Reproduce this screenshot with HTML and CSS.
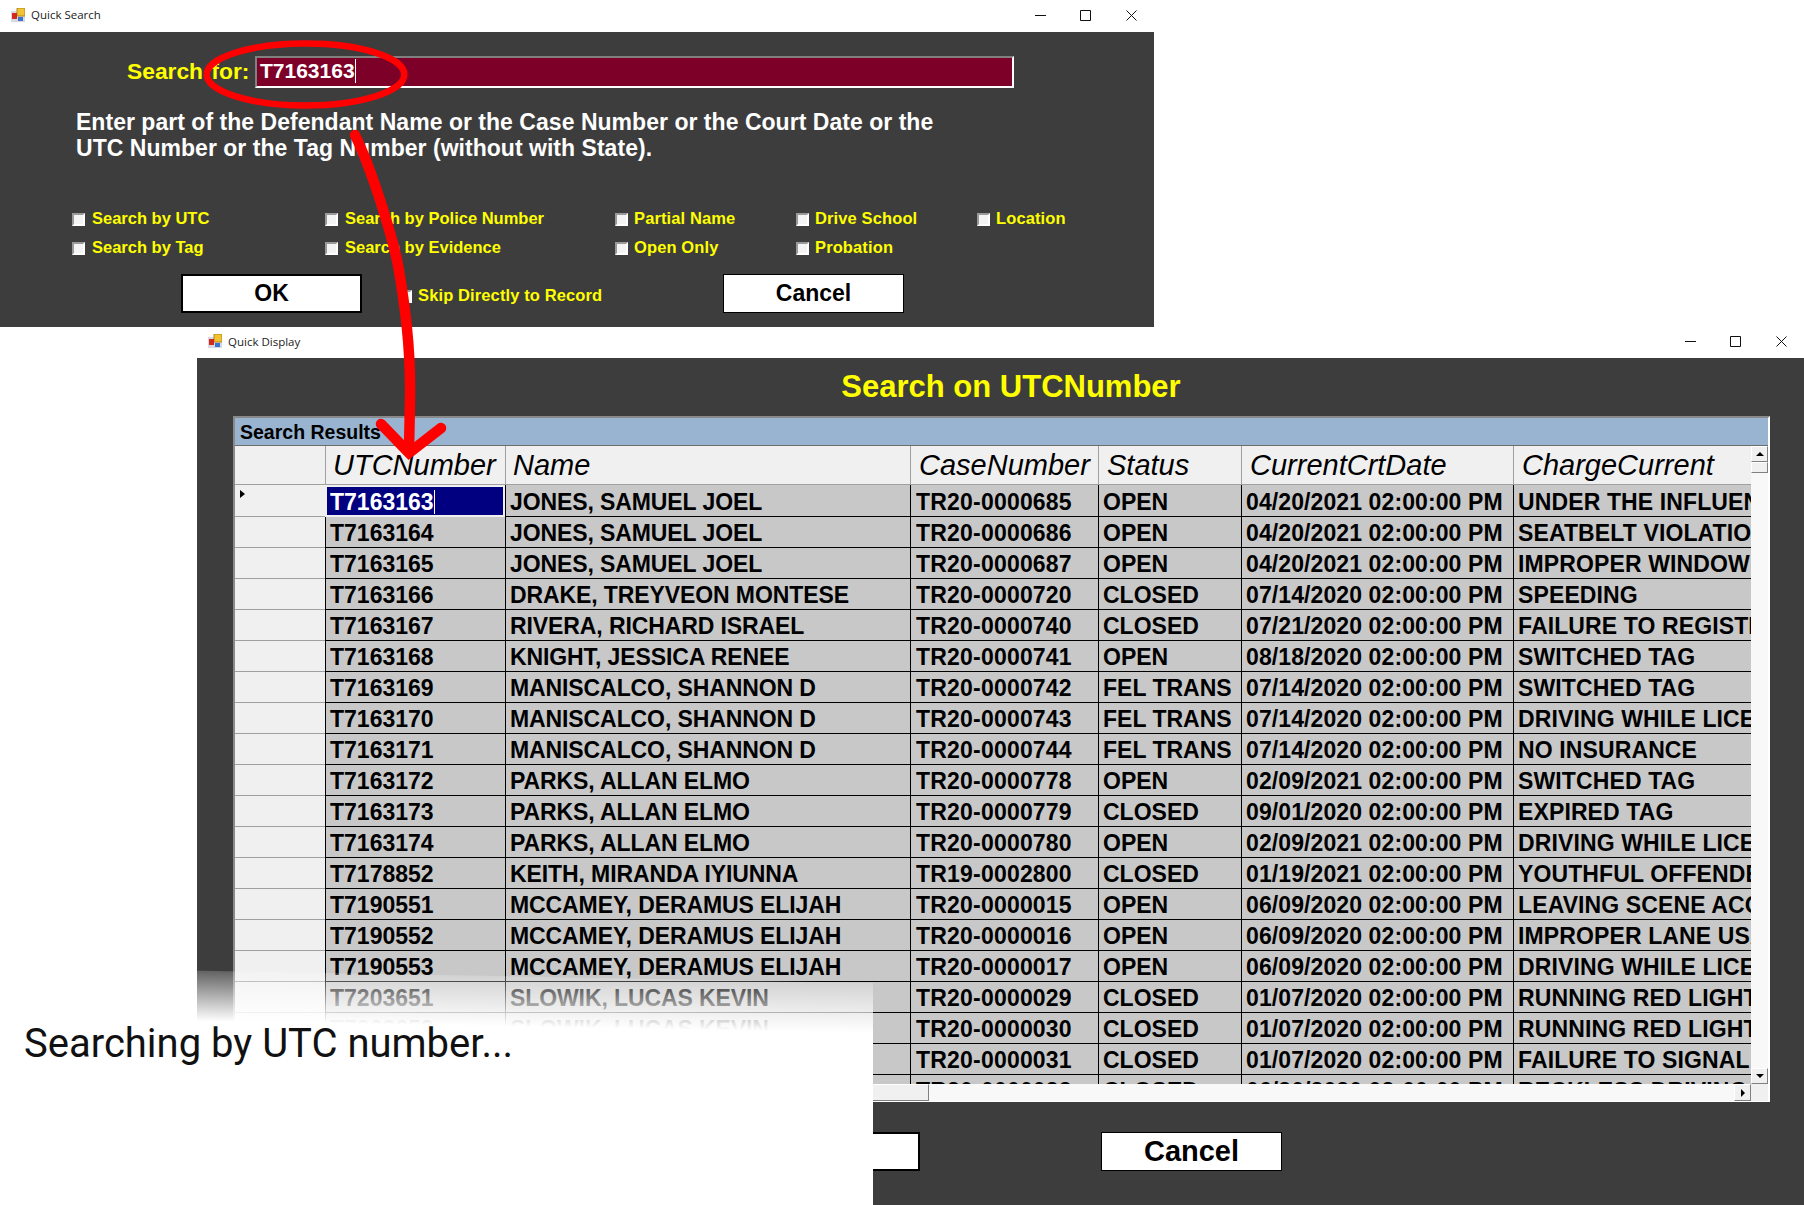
FILE: index.html
```html
<!DOCTYPE html>
<html lang="en">
<head>
    <meta charset="UTF-8">
    <meta name="viewport" content="width=device-width, initial-scale=1.0">
    <title>Searching by UTC number</title>
    <link rel="stylesheet" href="styles.css">
</head>
<body>

    <!-- Quick Search window -->
    <div class="window search-window">
        <div class="titlebar">
            <svg class="app-icon" viewBox="0 0 14 14"><rect x="0" y="3" width="14" height="11" fill="#d8d8e0"/><rect x="6" y="0" width="8" height="8" fill="#f2c230" stroke="#b08a20"/><rect x="1" y="5" width="5" height="6" fill="#d22a1e"/><rect x="7" y="9" width="5" height="4" fill="#3a72d0"/></svg>
            <span class="title-text">Quick Search</span>
            <div class="controls">
                <span class="control"><svg viewBox="0 0 11 11"><path d="M0 5.5H11" /></svg></span>
                <span class="control"><svg viewBox="0 0 11 11"><path d="M.5 .5H10.5V10.5H.5Z" /></svg></span>
                <span class="control"><svg viewBox="0 0 11 11"><path d="M.5 .5L10.5 10.5M10.5 .5L.5 10.5" /></svg></span>
            </div>
        </div>
        <div class="search-body">
            <div class="search-row">
                <span class="search-label">Search for:</span>
                <div class="search-input"><span class="caret">T7163163</span></div>
            </div>
            <p class="help">Enter part of the Defendant Name or the Case Number or the Court Date or the<br>UTC Number or the Tag Number (without with State).</p>
            <div class="options">
                <label class="option"><span class="check"></span>Search by UTC</label>
                <label class="option"><span class="check"></span>Search by Police Number</label>
                <label class="option tight"><span class="check"></span>Partial Name</label>
                <label class="option tight"><span class="check"></span>Drive School</label>
                <label class="option tight"><span class="check"></span>Location</label>
                <label class="option"><span class="check"></span>Search by Tag</label>
                <label class="option"><span class="check"></span>Search by Evidence</label>
                <label class="option tight"><span class="check"></span>Open Only</label>
                <label class="option tight"><span class="check"></span>Probation</label>
            </div>
            <div class="button-row">
                <button class="btn btn-default">OK</button>
                <label class="option tight skip"><span class="check"></span>Skip Directly to Record</label>
                <button class="btn">Cancel</button>
            </div>
        </div>
    </div>

    <!-- Quick Display window -->
    <div class="window display-window">
        <div class="titlebar">
            <svg class="app-icon" viewBox="0 0 14 14"><rect x="0" y="3" width="14" height="11" fill="#d8d8e0"/><rect x="6" y="0" width="8" height="8" fill="#f2c230" stroke="#b08a20"/><rect x="1" y="5" width="5" height="6" fill="#d22a1e"/><rect x="7" y="9" width="5" height="4" fill="#3a72d0"/></svg>
            <span class="title-text">Quick Display</span>
            <div class="controls">
                <span class="control"><svg viewBox="0 0 11 11"><path d="M0 5.5H11" /></svg></span>
                <span class="control"><svg viewBox="0 0 11 11"><path d="M.5 .5H10.5V10.5H.5Z" /></svg></span>
                <span class="control"><svg viewBox="0 0 11 11"><path d="M.5 .5L10.5 10.5M10.5 .5L.5 10.5" /></svg></span>
            </div>
        </div>
        <div class="display-body">
            <h1 class="display-title">Search on UTCNumber</h1>
            <div class="results">
                <div class="results-caption">Search Results</div>
                <div class="results-grid">
                    <div class="table-wrap">
                        <table>
                            <colgroup>
                                <col class="c-head"><col class="c-utc"><col class="c-name"><col class="c-case"><col class="c-status"><col class="c-date"><col class="c-charge">
                            </colgroup>
                            <thead>
                                <tr><th></th><th>UTCNumber</th><th>Name</th><th>CaseNumber</th><th>Status</th><th>CurrentCrtDate</th><th>ChargeCurrent</th></tr>
                            </thead>
                            <tbody>
                                <tr><th class="row-head current"></th><td class="selected"><span class="caret">T7163163</span></td><td>JONES, SAMUEL JOEL</td><td>TR20-0000685</td><td>OPEN</td><td>04/20/2021 02:00:00 PM</td><td>UNDER THE INFLUENCE</td></tr>
                                <tr><th class="row-head"></th><td>T7163164</td><td>JONES, SAMUEL JOEL</td><td>TR20-0000686</td><td>OPEN</td><td>04/20/2021 02:00:00 PM</td><td>SEATBELT VIOLATION</td></tr>
                                <tr><th class="row-head"></th><td>T7163165</td><td>JONES, SAMUEL JOEL</td><td>TR20-0000687</td><td>OPEN</td><td>04/20/2021 02:00:00 PM</td><td>IMPROPER WINDOW</td></tr>
                                <tr><th class="row-head"></th><td>T7163166</td><td>DRAKE, TREYVEON MONTESE</td><td>TR20-0000720</td><td>CLOSED</td><td>07/14/2020 02:00:00 PM</td><td>SPEEDING</td></tr>
                                <tr><th class="row-head"></th><td>T7163167</td><td>RIVERA, RICHARD ISRAEL</td><td>TR20-0000740</td><td>CLOSED</td><td>07/21/2020 02:00:00 PM</td><td>FAILURE TO REGISTER</td></tr>
                                <tr><th class="row-head"></th><td>T7163168</td><td>KNIGHT, JESSICA RENEE</td><td>TR20-0000741</td><td>OPEN</td><td>08/18/2020 02:00:00 PM</td><td>SWITCHED TAG</td></tr>
                                <tr><th class="row-head"></th><td>T7163169</td><td>MANISCALCO, SHANNON D</td><td>TR20-0000742</td><td>FEL TRANS</td><td>07/14/2020 02:00:00 PM</td><td>SWITCHED TAG</td></tr>
                                <tr><th class="row-head"></th><td>T7163170</td><td>MANISCALCO, SHANNON D</td><td>TR20-0000743</td><td>FEL TRANS</td><td>07/14/2020 02:00:00 PM</td><td>DRIVING WHILE LICENSE</td></tr>
                                <tr><th class="row-head"></th><td>T7163171</td><td>MANISCALCO, SHANNON D</td><td>TR20-0000744</td><td>FEL TRANS</td><td>07/14/2020 02:00:00 PM</td><td>NO INSURANCE</td></tr>
                                <tr><th class="row-head"></th><td>T7163172</td><td>PARKS, ALLAN ELMO</td><td>TR20-0000778</td><td>OPEN</td><td>02/09/2021 02:00:00 PM</td><td>SWITCHED TAG</td></tr>
                                <tr><th class="row-head"></th><td>T7163173</td><td>PARKS, ALLAN ELMO</td><td>TR20-0000779</td><td>CLOSED</td><td>09/01/2020 02:00:00 PM</td><td>EXPIRED TAG</td></tr>
                                <tr><th class="row-head"></th><td>T7163174</td><td>PARKS, ALLAN ELMO</td><td>TR20-0000780</td><td>OPEN</td><td>02/09/2021 02:00:00 PM</td><td>DRIVING WHILE LICENSE</td></tr>
                                <tr><th class="row-head"></th><td>T7178852</td><td>KEITH, MIRANDA IYIUNNA</td><td>TR19-0002800</td><td>CLOSED</td><td>01/19/2021 02:00:00 PM</td><td>YOUTHFUL OFFENDER</td></tr>
                                <tr><th class="row-head"></th><td>T7190551</td><td>MCCAMEY, DERAMUS ELIJAH</td><td>TR20-0000015</td><td>OPEN</td><td>06/09/2020 02:00:00 PM</td><td>LEAVING SCENE ACCIDENT</td></tr>
                                <tr><th class="row-head"></th><td>T7190552</td><td>MCCAMEY, DERAMUS ELIJAH</td><td>TR20-0000016</td><td>OPEN</td><td>06/09/2020 02:00:00 PM</td><td>IMPROPER LANE USAGE</td></tr>
                                <tr><th class="row-head"></th><td>T7190553</td><td>MCCAMEY, DERAMUS ELIJAH</td><td>TR20-0000017</td><td>OPEN</td><td>06/09/2020 02:00:00 PM</td><td>DRIVING WHILE LICENSE</td></tr>
                                <tr><th class="row-head"></th><td>T7203651</td><td>SLOWIK, LUCAS KEVIN</td><td>TR20-0000029</td><td>CLOSED</td><td>01/07/2020 02:00:00 PM</td><td>RUNNING RED LIGHT</td></tr>
                                <tr><th class="row-head"></th><td>T7203652</td><td>SLOWIK, LUCAS KEVIN</td><td>TR20-0000030</td><td>CLOSED</td><td>01/07/2020 02:00:00 PM</td><td>RUNNING RED LIGHT</td></tr>
                                <tr><th class="row-head"></th><td>T7203653</td><td>SLOWIK, LUCAS KEVIN</td><td>TR20-0000031</td><td>CLOSED</td><td>01/07/2020 02:00:00 PM</td><td>FAILURE TO SIGNAL</td></tr>
                                <tr><th class="row-head"></th><td>T7203654</td><td>SLOWIK, LUCAS KEVIN</td><td>TR20-0000032</td><td>CLOSED</td><td>06/30/2020 02:00:00 PM</td><td>RECKLESS DRIVING</td></tr>
                            </tbody>
                        </table>
                    </div>
                    <div class="vscroll">
                        <span class="scroll-btn"><i class="arrow-up"></i></span>
                        <span class="vthumb"></span>
                        <span class="scroll-track"></span>
                        <span class="scroll-btn"><i class="arrow-down"></i></span>
                    </div>
                    <div class="hscroll">
                        <span class="hthumb"></span>
                        <span class="scroll-track"></span>
                        <span class="scroll-btn"><i class="arrow-right"></i></span>
                    </div>
                    <div class="corner"></div>
                </div>
            </div>
            <div class="display-buttons">
                <button class="btn btn-default">OK</button>
                <button class="btn">Cancel</button>
            </div>
        </div>
    </div>

    <!-- White caption panel that fades over the lower left of the display window -->
    <div class="caption-panel">
        <p class="caption-text">Searching by UTC number...</p>
    </div>

    <!-- Red annotation drawn over both windows -->
    <svg class="annotation" viewBox="0 0 1804 1205">
        <ellipse cx="305.5" cy="74.5" rx="98.8" ry="31" />
        <path class="stem" d="M355 135C372 170 392 235 398 265C404 300 411 345 410 400L409 450" />
        <path class="stem" d="M381 424L409 453L441 428" />
    </svg>

</body>
</html>
```

FILE: styles.css
```css
* {
    box-sizing: border-box;
}

html {
    overflow: hidden;
}

body {
    margin: 0;
    width: 1804px;
    height: 1205px;
    position: relative;
    overflow: hidden;
    background-color: white;
    font-family: "Liberation Sans", Arial, sans-serif;
}

.window {
    position: absolute;
    background-color: white;
}

.search-window {
    left: 0;
    top: 0;
    width: 1154px;
}

.display-window {
    left: 197px;
    top: 327px;
    width: 1607px;
    height: 878px;
}

/* Title bar */
.titlebar {
    display: flex;
    align-items: flex-start;
    height: 32px;
    padding-left: 11px;
    background-color: white;
}

.display-window .titlebar {
    height: 31px;
}

.app-icon {
    width: 14px;
    height: 14px;
    margin-top: 8px;
    margin-right: 6px;
}

.display-window .app-icon {
    margin-top: 7px;
}

.title-text {
    font-family: "Open Sans", sans-serif;
    font-size: 11.5px;
    line-height: 30px;
    color: #222;
}

.display-window .title-text {
    line-height: 29px;
}

.controls {
    display: flex;
    margin-left: auto;
}

.control {
    display: flex;
    align-items: center;
    justify-content: center;
    width: 45px;
    height: 30px;
}

.control:last-child {
    margin-left: 1px;
}

.display-window .control {
    height: 29px;
}

.control svg {
    width: 11px;
    height: 11px;
    fill: none;
    stroke: #111;
    stroke-width: 1;
}

/* Search form */
.search-body {
    height: 295px;
    background-color: #3d3d3d;
    overflow: hidden;
}

.search-row {
    display: flex;
    align-items: center;
    margin-top: 24px;
    padding-left: 127px;
}

.search-label {
    width: 128px;
    padding-bottom: 2px;
    font-size: 22.8px;
    word-spacing: 2px;
    font-weight: bold;
    color: #ffff00;
}

.search-input {
    width: 759px;
    height: 32px;
    padding-left: 3px;
    line-height: 25px;
    font-size: 21px;
    font-weight: bold;
    color: white;
    background-color: #7d0029;
    border: 2px solid white;
    border-top-color: #808080;
    border-left-color: #808080;
}

.caret {
    display: inline-block;
    line-height: 24px;
    border-right: 1px solid white;
}

.help {
    margin: 21px 0 0;
    padding-left: 76px;
    font-size: 23px;
    line-height: 26px;
    letter-spacing: 0.03px;
    font-weight: bold;
    color: white;
}

.options {
    display: grid;
    grid-template-columns: 253px 290px 181px 181px auto;
    grid-auto-rows: 29px;
    margin-top: 43px;
    padding-left: 72px;
}

.option {
    display: flex;
    align-items: center;
    font-size: 16.5px;
    font-weight: bold;
    color: #ffff00;
}

.check {
    width: 13px;
    height: 13px;
    margin-right: 7px;
    margin-top: 2px;
    background-color: #f4f4f4;
    border: 2px solid white;
    border-top-color: #9a9a9a;
    border-left-color: #9a9a9a;
}

.tight {
    letter-spacing: 0.12px;
}

.tight .check {
    margin-right: 6px;
}

.button-row {
    display: flex;
    align-items: center;
    margin-top: 12px;
    padding-left: 181px;
}

.skip {
    width: 324px;
    margin-left: 37px;
    padding-top: 3px;
}

.btn {
    width: 181px;
    height: 39px;
    padding: 0;
    font-family: "Liberation Sans", Arial, sans-serif;
    font-size: 23px;
    font-weight: bold;
    color: black;
    background-color: white;
    border: 1px solid black;
}

.btn-default {
    border-width: 2px;
}

/* Results window */
.display-body {
    height: 847px;
    padding-left: 36px;
    background-color: #3d3d3d;
}

.display-title {
    margin: 0;
    padding-right: 15px;
    height: 58px;
    line-height: 57px;
    text-align: center;
    font-size: 31px;
    font-weight: bold;
    color: #ffff00;
}

.results {
    display: flex;
    flex-direction: column;
    width: 1537px;
    height: 686px;
    background-color: #f0f0f0;
    border: 2px solid white;
    border-top-color: #8a8a8a;
    border-left-color: #8a8a8a;
}

.results-caption {
    flex: none;
    height: 28px;
    padding-left: 5px;
    line-height: 28px;
    font-size: 19.5px;
    font-weight: bold;
    color: black;
    background-color: #99b4d1;
    border-bottom: 1px solid #6d6d6d;
}

.results-grid {
    flex: 1;
    display: grid;
    grid-template-columns: 1516px 17px;
    grid-template-rows: 638px 17px;
    min-height: 0;
}

.table-wrap {
    overflow: hidden;
    background-color: #f8f8f8;
}

table {
    width: 1516px;
    table-layout: fixed;
    border-collapse: separate;
    border-spacing: 0;
}

.c-head { width: 90px; }
.c-utc { width: 180px; }
.c-name { width: 405px; }
.c-case { width: 188px; }
.c-status { width: 143px; }
.c-date { width: 272px; }
.c-charge { width: 238px; }

thead th {
    height: 39px;
    padding: 0 0 0 7px;
    text-align: left;
    font-size: 29px;
    font-weight: normal;
    font-style: italic;
    color: black;
    white-space: nowrap;
    overflow: hidden;
    background-color: #f0f0f0;
    border-left: 1px solid #a0a0a0;
    border-bottom: 1px solid #a0a0a0;
}

thead th:first-child {
    border-left: none;
}

thead th:nth-child(n+4) {
    padding-left: 8px;
}

td {
    height: 31px;
    padding: 2px 0 0 4px;
    line-height: 26px;
    font-size: 23px;
    font-weight: bold;
    color: black;
    white-space: nowrap;
    overflow: hidden;
    background-color: #c8c8c8;
    border-left: 1px solid black;
    border-bottom: 1px solid black;
}

/* hinted Arial in the original runs a little wider or narrower per column */
td:nth-child(3) {
    letter-spacing: -0.1px;
}

td:nth-child(4) {
    padding-left: 5px;
    letter-spacing: 0.2px;
}

td:nth-child(6) {
    letter-spacing: 0.1px;
}

td:nth-child(7) {
    letter-spacing: 0.12px;
}

.row-head {
    position: relative;
    padding: 0;
    background-color: #f0f0f0;
    border-bottom: 1px solid #a0a0a0;
}

.current::after {
    content: "";
    position: absolute;
    left: 5px;
    top: 5px;
    border-left: 5px solid black;
    border-top: 4px solid transparent;
    border-bottom: 4px solid transparent;
}

td.selected {
    padding: 2px 0 0 3px;
    color: white;
    background-color: #000080;
    border: 2px solid #f0f0f0;
}

/* Scrollbars */
.vscroll {
    display: flex;
    flex-direction: column;
}

.hscroll {
    display: flex;
}

.scroll-track {
    flex: 1;
    background-color: #f8f8f8;
}

.scroll-btn {
    flex: none;
    display: flex;
    align-items: center;
    justify-content: center;
    width: 17px;
    height: 17px;
    background-color: #f0f0f0;
    border: 1px solid;
    border-color: white #808080 #808080 white;
}

.vscroll .scroll-btn {
    height: 16px;
}

.vthumb {
    flex: none;
    height: 11px;
    background-color: #f0f0f0;
    border: 1px solid;
    border-color: white #808080 #808080 white;
}

.hthumb {
    flex: none;
    width: 694px;
    background-color: #f0f0f0;
    border: 1px solid;
    border-color: white #808080 #808080 white;
}

.corner {
    background-color: #f0f0f0;
}

.arrow-up, .arrow-down {
    border-left: 4px solid transparent;
    border-right: 4px solid transparent;
}

.arrow-up {
    border-bottom: 4px solid black;
}

.arrow-down {
    border-top: 4px solid black;
}

.arrow-right {
    border-top: 4px solid transparent;
    border-bottom: 4px solid transparent;
    border-left: 4px solid black;
}

.display-buttons {
    display: flex;
    gap: 181px;
    margin-top: 30px;
    padding-left: 506px;
}

.display-buttons .btn {
    font-size: 29px;
}

/* Caption panel */
.caption-panel {
    position: absolute;
    left: 0;
    top: 965px;
    width: 873px;
    height: 240px;
    padding: 55px 0 0 24px;
    background: linear-gradient(181deg, rgba(255, 255, 255, 0.2) 18px, white 68px);
    clip-path: polygon(0 2px, 100% 18px, 100% 100%, 0 100%);
}

.caption-text {
    margin: 0;
    font-family: Roboto, sans-serif;
    font-size: 40px;
    line-height: 47px;
    color: #111;
}

/* Annotation */
.annotation {
    position: absolute;
    left: 0;
    top: 0;
    width: 1804px;
    height: 1205px;
    fill: none;
    stroke: #ff0000;
    pointer-events: none;
}

.annotation ellipse {
    stroke-width: 6.5;
}

.annotation .stem {
    stroke-width: 10.5;
    stroke-linecap: round;
}
```
